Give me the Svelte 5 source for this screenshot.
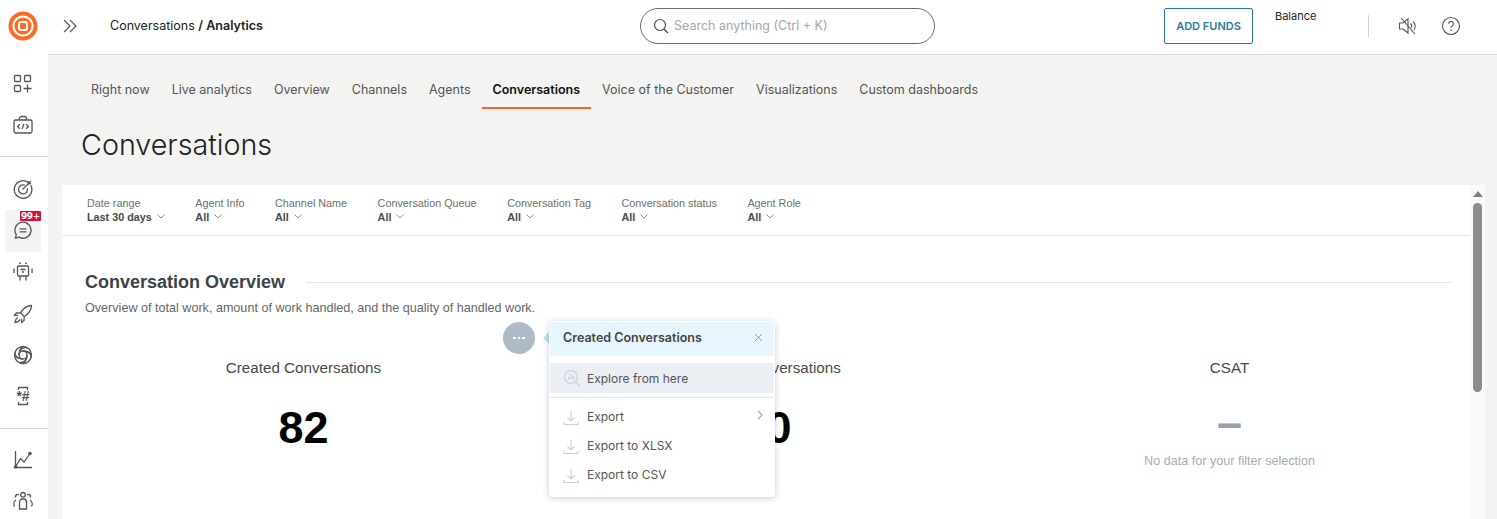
<script>
  const tabs = ['Right now', 'Live analytics', 'Overview', 'Channels', 'Agents', 'Conversations', 'Voice of the Customer', 'Visualizations', 'Custom dashboards'];
  const activeTab = 'Conversations';

  const filters = [
    { label: 'Date range', value: 'Last 30 days' },
    { label: 'Agent Info', value: 'All' },
    { label: 'Channel Name', value: 'All' },
    { label: 'Conversation Queue', value: 'All' },
    { label: 'Conversation Tag', value: 'All' },
    { label: 'Conversation status', value: 'All' },
    { label: 'Agent Role', value: 'All' }
  ];

  const exportsMenu = [
    { label: 'Export', more: true },
    { label: 'Export to XLSX', more: false },
    { label: 'Export to CSV', more: false }
  ];
</script>

<div class="shell">
  <aside class="sidebar">
    <div class="logo">
      <svg width="30" height="30" viewBox="0 0 30 30">
        <circle cx="15" cy="15" r="14.5" fill="#fb6b26" />
        <circle cx="15" cy="15" r="9.6" fill="none" stroke="#fff" stroke-width="2" />
        <rect x="11" y="11" width="8" height="8" rx="2.2" fill="none" stroke="#fff" stroke-width="2" />
      </svg>
    </div>

    <div class="side-group first">
      <div class="side-item">
        <svg class="ico" viewBox="0 0 20 20">
          <rect x="1.5" y="1.5" width="6" height="6" rx="1" />
          <rect x="11.5" y="1.5" width="6" height="6" rx="1" />
          <rect x="1.5" y="11.5" width="6" height="6" rx="1" />
          <path d="M14.5 10.5v8M10.5 14.5h8" />
        </svg>
      </div>
      <div class="side-item">
        <svg class="ico" viewBox="0 0 20 20">
          <rect x="1" y="5" width="18" height="13" rx="1.5" />
          <path d="M6.5 5V3.5a2 2 0 0 1 2-2h3a2 2 0 0 1 2 2V5" />
          <path d="M6.8 9.3 4.6 11.5l2.2 2.2M13.2 9.3l2.2 2.2-2.2 2.2M11 9l-2 5" />
        </svg>
      </div>
    </div>

    <div class="side-group">
      <div class="side-item">
        <svg class="ico" viewBox="0 0 20 20">
          <path d="M15.2 3.4A8.8 8.8 0 1 0 17.6 6" />
          <path d="M11.8 6.2a4.5 4.5 0 1 0 2.6 3" />
          <path d="M9.5 10.5 18 2M15.6 2.2l-.2 2.6 2.6-.2" />
        </svg>
      </div>
      <div class="side-item active">
        <svg class="ico" viewBox="0 0 20 20">
          <path d="M10 1.2a8 8 0 1 1-4 14.9l-3.6.9.9-3.4A8 8 0 0 1 10 1.2Z" />
          <path d="M6.6 7.8h6.8M6.6 10.8h6.8" />
        </svg>
        <span class="badge">99+</span>
      </div>
      <div class="side-item">
        <svg class="ico" viewBox="0 0 20 20">
          <rect x="4.5" y="4" width="11" height="10" rx="1" />
          <path d="M1 6.5v4.5M19 6.5v4.5M7 14v4.5M13 14v4.5M7.5 7.5h5M9 10h2" />
          <circle class="dot" cx="7" cy="1.2" r=".9" />
          <circle class="dot" cx="13" cy="1.2" r=".9" />
        </svg>
      </div>
      <div class="side-item">
        <svg class="ico" viewBox="0 0 20 20">
          <path d="M18.5 1.5c-4.8.2-8.2 2.6-11 7.3l3.7 3.7c4.7-2.8 7.1-6.2 7.3-11Z" />
          <path d="M7.5 8.8 3.500 9l-2 2.200 3.800.4M11.200 12.500l-.2 4-2.200 2-.4-3.800M5 13.500c-1.600.6-2.600 2.300-3 5 2.700-.4 4.400-1.400 5-3" />
        </svg>
      </div>
      <div class="side-item">
        <svg class="ico" viewBox="0 0 20 20">
          <circle cx="10" cy="10" r="8.500" />
          <circle cx="10" cy="10" r="4" />
          <path d="M6.500 7.500C7 4.500 10 1.800 14 2.800M12.500 6.800C15.500 6.500 18.500 9 18 13M13.800 11.500C13.500 14.800 11 17.800 7 17.500M7.500 13.500C4.500 13.500 1.500 11 2 7" />
          <path d="M10 1.500C7.500 3 6 5 6 10M18.500 10C17 7.500 15 6 10 6M10 18.500C12.500 17 14 15 14 10M1.500 10C3 12.500 5 14 10 14" />
        </svg>
      </div>
      <div class="side-item">
        <svg class="ico" viewBox="0 0 20 20">
          <path d="M5.500 4V1.500h9V4M5.500 16V18.500h9V16" />
          <text x="10" y="14.500" class="code">*#</text>
        </svg>
      </div>
    </div>

    <div class="side-group last">
      <div class="side-item">
        <svg class="ico" viewBox="0 0 20 20">
          <path d="M2.500 1v16.500H19" />
          <path d="M2.500 17 7.500 8.500 11 12l6-8.500" />
          <circle class="dot" cx="2.500" cy="17" r="1.800" />
          <circle class="dot" cx="17" cy="3.500" r="1.800" />
        </svg>
      </div>
      <div class="side-item">
        <svg class="ico" viewBox="0 0 20 20">
          <circle cx="10" cy="3.800" r="2.300" />
          <path d="M6.500 18v-7a3 3 0 0 1 3-3h1a3 3 0 0 1 3 3v7Z" />
          <path d="M3 6.500a1.800 1.800 0 0 1 1.500-3 2 2 0 0 1 1.200.5M1.500 15.500c-1-2-1-5 1.500-6.500M17 6.500a1.800 1.800 0 0 0-1.500-3 2 2 0 0 0-1.200.5M18.500 15.500c1-2 1-5-1.500-6.500" />
        </svg>
      </div>
    </div>
  </aside>

  <div class="right">
    <header class="topbar">
      <div class="crumbs">
        <svg class="chevrons" width="14" height="14" viewBox="0 0 14 14">
          <path d="M1 1 7 7l-6 6M7 1l6 6-6 6" />
        </svg>
        <span class="crumb">Conversations <b>/ Analytics</b></span>
      </div>
      <div class="search">
        <svg width="16" height="16" viewBox="0 0 16 16">
          <circle cx="7" cy="7" r="5.500" />
          <path d="m11 11 4 4" />
        </svg>
        <span>Search anything (Ctrl + K)</span>
      </div>
      <div class="actions">
        <button class="funds">ADD FUNDS</button>
        <span class="balance">Balance</span>
        <span class="vline"></span>
        <svg class="action-ico" width="20" height="20" viewBox="0 0 20 20">
          <path d="M1.500 7v6h3.500l5 4V3l-5 4Z" />
          <path d="M12.500 7.500a3.500 3.500 0 0 1 .5 4.500M15 5.500a6 6 0 0 1 .8 8.500M3 2l14 16" />
        </svg>
        <svg class="action-ico help" width="20" height="20" viewBox="0 0 20 20">
          <circle cx="10" cy="10" r="8.500" />
          <path d="M7.600 7.800a2.400 2.400 0 1 1 3.600 2.100c-.8.500-1.200 1-1.200 1.900" />
          <circle class="dot" cx="10" cy="14.300" r=".8" />
        </svg>
      </div>
    </header>

    <main class="page">
      <nav class="tabs">
        {#each tabs as tab}
          <span class="tab" class:current={tab === activeTab}>{tab}</span>
        {/each}
      </nav>
      <h1>Conversations</h1>

      <section class="card">
        <div class="card-body">
          <div class="filters">
            {#each filters as f}
              <div class="filter">
                <div class="f-label">{f.label}</div>
                <div class="f-value">
                  {f.value}
                  <svg width="8" height="5" viewBox="0 0 8 5"><path d="m.5.500 3.500 3.500L7.500.500" /></svg>
                </div>
              </div>
            {/each}
          </div>

          <div class="overview">
            <div class="section-head">
              <h2>Conversation Overview</h2>
              <span class="rule"></span>
            </div>
            <p class="sub">Overview of total work, amount of work handled, and the quality of handled work.</p>
            <div class="metrics">
              <div class="metric">
                <div class="m-label">Created Conversations</div>
                <div class="m-value">82</div>
              </div>
              <div class="metric">
                <div class="m-label">Closed Conversations</div>
                <div class="m-value">80</div>
              </div>
              <div class="metric">
                <div class="m-label">CSAT</div>
                <div class="m-value empty">–</div>
                <div class="m-note">No data for your filter selection</div>
              </div>
            </div>
          </div>
        </div>

        <div class="scrollbar">
          <span class="up"></span>
          <span class="thumb"></span>
        </div>

        <button class="kebab" aria-label="More"><i></i><i></i><i></i></button>
        <span class="pointer"></span>
        <div class="popover">
          <div class="pop-head">
            <span>Created Conversations</span>
            <svg width="9" height="9" viewBox="0 0 9 9"><path d="m1 1 7 7M8 1 1 8" /></svg>
          </div>
          <div class="pop-item hover">
            <svg width="18" height="18" viewBox="0 0 18 18">
              <circle cx="8" cy="8" r="6.500" />
              <path d="m13 13 4 4M5.500 10.500V8M8 10.500v-5M10.500 10.500V7" />
            </svg>
            Explore from here
          </div>
          <div class="pop-sep"></div>
          {#each exportsMenu as item}
            <div class="pop-item">
              <svg class="down" width="16" height="16" viewBox="0 0 16 16">
                <path d="M8 1v9.500M4.500 7.500 8 11l3.500-3.500M1 12v2.500h14V12" />
              </svg>
              {item.label}
              {#if item.more}
                <svg class="more" width="6" height="10" viewBox="0 0 6 10"><path d="m1 1 4 4-4 4" /></svg>
              {/if}
            </div>
          {/each}
        </div>
      </section>
    </main>
  </div>
</div>

<style>
  :global(body) {
    margin: 0;
    overflow: hidden;
    background: #fff;
  }
  * { box-sizing: border-box; }

  .shell {
    display: flex;
    height: 519px;
    font-family: Inter, "Liberation Sans", sans-serif;
    color: #222;
    overflow: hidden;
  }

  /* sidebar */
  .sidebar {
    width: 48px;
    flex: none;
    background: #fff;
  }
  .logo {
    height: 52px;
    padding: 11px 0 0 8px;
  }
  .side-group {
    padding: 12px 0 11px;
    border-bottom: 1px solid #d9d9d9;
  }
  .side-group.first { padding: 11px 0 10px; }
  .side-group.last { padding-top: 10px; border-bottom: 0; }
  .side-item {
    position: relative;
    height: 41.4px;
    display: flex;
    align-items: center;
    justify-content: center;
    margin: 0 7px 0 5px;
    border-radius: 2px;
  }
  .side-item.active { background: #f3f3f1; }
  .ico {
    width: 20px;
    height: 20px;
    fill: none;
    stroke: #555;
    stroke-width: 1.3;
  }
  .ico .dot { fill: #555; stroke: none; }
  .ico .code {
    font: bold 14px "Liberation Sans", sans-serif;
    fill: #555;
    stroke: none;
    text-anchor: middle;
  }
  .badge {
    position: absolute;
    top: 1px;
    left: 15px;
    width: 21px;
    height: 10px;
    background: #d5103c;
    color: #fff;
    font: bold 9px/10px "DejaVu Sans", sans-serif;
    text-align: center;
    border-radius: 1px;
    letter-spacing: -.3px;
  }

  /* top bar */
  .right {
    flex: 1;
    min-width: 0;
    display: flex;
    flex-direction: column;
  }
  .topbar {
    height: 55px;
    flex: none;
    display: grid;
    grid-template-columns: 592px 295px 1fr;
    align-items: center;
    border-bottom: 1px solid #d9d9d9;
    padding-bottom: 3px;
  }
  .crumbs {
    display: flex;
    align-items: center;
    padding-left: 15px;
    gap: 33px;
  }
  .chevrons { fill: none; stroke: #555; stroke-width: 1.1; }
  .crumb { font-size: 12.5px; color: #222; margin-top: -1px; }
  .crumb b { font-weight: 600; }
  .search {
    height: 36px;
    border: 1px solid #6b6b6b;
    border-radius: 18px;
    display: flex;
    align-items: center;
    gap: 5px;
    padding: 0 0 0 12px;
    font-size: 12.5px;
    color: #a8a8a8;
  }
  .search span { margin-top: -1px; }
  .search svg { fill: none; stroke: #444; stroke-width: 1.2; }
  .actions {
    display: flex;
    align-items: center;
    padding-left: 229px;
    height: 36px;
  }
  .funds {
    width: 89px;
    height: 36px;
    background: #fff;
    border: 1px solid #2b7a9e;
    border-radius: 2px;
    color: #2f7ba1;
    font: 600 11px Inter, sans-serif;
    padding: 0;
    flex: none;
  }
  .balance {
    font-size: 11px;
    color: #222;
    margin-left: 22px;
    align-self: flex-start;
    margin-top: 1px;
  }
  .vline {
    width: 1px;
    height: 22px;
    background: #d4d4d4;
    margin-left: 52px;
  }
  .action-ico {
    fill: none;
    stroke: #555;
    stroke-width: 1.1;
    margin-left: 29px;
    flex: none;
  }
  .action-ico.help { margin-left: 23px; }
  .action-ico .dot { fill: #555; stroke: none; }

  /* page */
  .page {
    flex: 1;
    min-height: 0;
    background: #f3f3f1;
    padding: 0 12px 0 14px;
    display: flex;
    flex-direction: column;
  }
  .tabs {
    display: flex;
    padding-left: 18px;
    height: 54px;
    align-items: stretch;
  }
  .tab {
    padding: 27px 11px 0;
    font-size: 12.5px;
    color: #555;
    border-bottom: 1px solid transparent;
    white-space: nowrap;
  }
  .tab.current {
    color: #111;
    font-weight: 600;
    border-bottom: 2px solid #f0672b;
  }
  h1 {
    margin: 0;
    padding: 18px 0 0 19px;
    height: 76px;
    font-size: 28.7px;
    line-height: 35px;
    font-weight: 300;
    color: #222;
  }

  .card {
    position: relative;
    flex: 1;
    min-height: 0;
    display: flex;
    background: #fff;
    overflow: hidden;
    font-family: "Liberation Sans", Arial, sans-serif;
  }
  .card-body { flex: 1; min-width: 0; }
  .filters {
    display: flex;
    gap: 30.5px;
    height: 51px;
    padding: 11px 0 0 25px;
    border-bottom: 1px solid #e2e5ea;
  }
  .f-label { font-size: 10.8px; line-height: 14px; color: #6e6e6e; white-space: nowrap; }
  .f-value {
    font-size: 10.8px;
    line-height: 14px;
    font-weight: bold;
    color: #4a4a4a;
    white-space: nowrap;
    display: flex;
    align-items: center;
    gap: 5px;
  }
  .f-value svg { fill: none; stroke: #8a8f96; stroke-width: 1; margin-top: -2px; }

  .overview { padding: 36px 18px 0 23px; }
  .section-head {
    display: flex;
    align-items: center;
    gap: 21px;
    height: 20px;
  }
  h2 {
    margin: 0;
    font-size: 18px;
    font-weight: bold;
    color: #3d4248;
    white-space: nowrap;
  }
  .rule { flex: 1; height: 1px; background: #e2e5ea; }
  .sub {
    margin: 8px 0 0;
    font-size: 12.6px;
    line-height: 16px;
    color: #666;
    white-space: nowrap;
  }
  .metrics {
    display: grid;
    grid-template-columns: repeat(3, 463px);
    margin: 43px 0 0 -13px;
  }
  .metric { text-align: center; }
  .m-label { font-size: 15.2px; line-height: 18px; color: #4a4a4a; }
  .m-value {
    font-size: 45px;
    font-weight: bold;
    line-height: 52px;
    margin-top: 25px;
    color: #000;
  }
  .m-value.empty { color: #97a3af; margin-top: 19.5px; }
  .m-note { font-size: 12.6px; line-height: 16px; color: #a3acb6; margin-top: 4.500px; font-weight: normal; }

  .scrollbar {
    width: 15px;
    flex: none;
    background: #fafafa;
    display: flex;
    flex-direction: column;
    align-items: center;
    padding-top: 6px;
  }
  .up {
    width: 0;
    height: 0;
    border-left: 5px solid transparent;
    border-right: 5px solid transparent;
    border-bottom: 6px solid #808080;
  }
  .thumb {
    width: 9px;
    height: 189px;
    margin-top: 6px;
    background: #8c8c8c;
    border-radius: 5px;
  }

  /* popover over the metrics */
  .kebab {
    position: absolute;
    left: 441px;
    top: 137px;
    width: 32px;
    height: 32px;
    padding: 0;
    border: 0;
    border-radius: 50%;
    background: #aebbc6;
    display: flex;
    align-items: center;
    justify-content: center;
    gap: 2px;
  }
  .kebab i { width: 2.500px; height: 2px; background: #fff; }
  .pointer {
    position: absolute;
    left: 481px;
    top: 147px;
    border-top: 6px solid transparent;
    border-bottom: 6px solid transparent;
    border-right: 6px solid #c4dfea;
  }
  .popover {
    position: absolute;
    left: 487px;
    top: 136px;
    width: 226px;
    height: 176px;
    padding: 1px;
    background: #fff;
    border-radius: 3px;
    box-shadow: 0 1px 6px rgba(60, 70, 90, .28);
    font-family: Inter, sans-serif;
    font-size: 12px;
    color: #555;
  }
  .pop-head {
    height: 34px;
    background: #e6f6fc;
    display: flex;
    align-items: center;
    justify-content: space-between;
    padding: 0 11px 4px 13px;
    font-size: 12.500px;
    font-weight: 600;
    color: #444;
  }
  .pop-head svg { fill: none; stroke: #8d99a5; stroke-width: 1; }
  .pop-item {
    position: relative;
    height: 29px;
    display: flex;
    align-items: center;
    gap: 8px;
    padding-left: 13px;
  }
  .pop-item svg { fill: none; stroke: #c5cfdb; stroke-width: 1.1; flex: none; }
  .pop-item .down { margin-top: 3px; }
  .pop-item.hover {
    height: 30px;
    margin-top: 7px;
    background: #ebeef2;
    gap: 6px;
  }
  .pop-item .more {
    position: absolute;
    right: 11px;
    top: 8px;
    stroke: #9aa6b2;
  }
  .pop-sep { height: 1px; background: #e4e6ec; margin: 4px 0 4px; }
</style>
